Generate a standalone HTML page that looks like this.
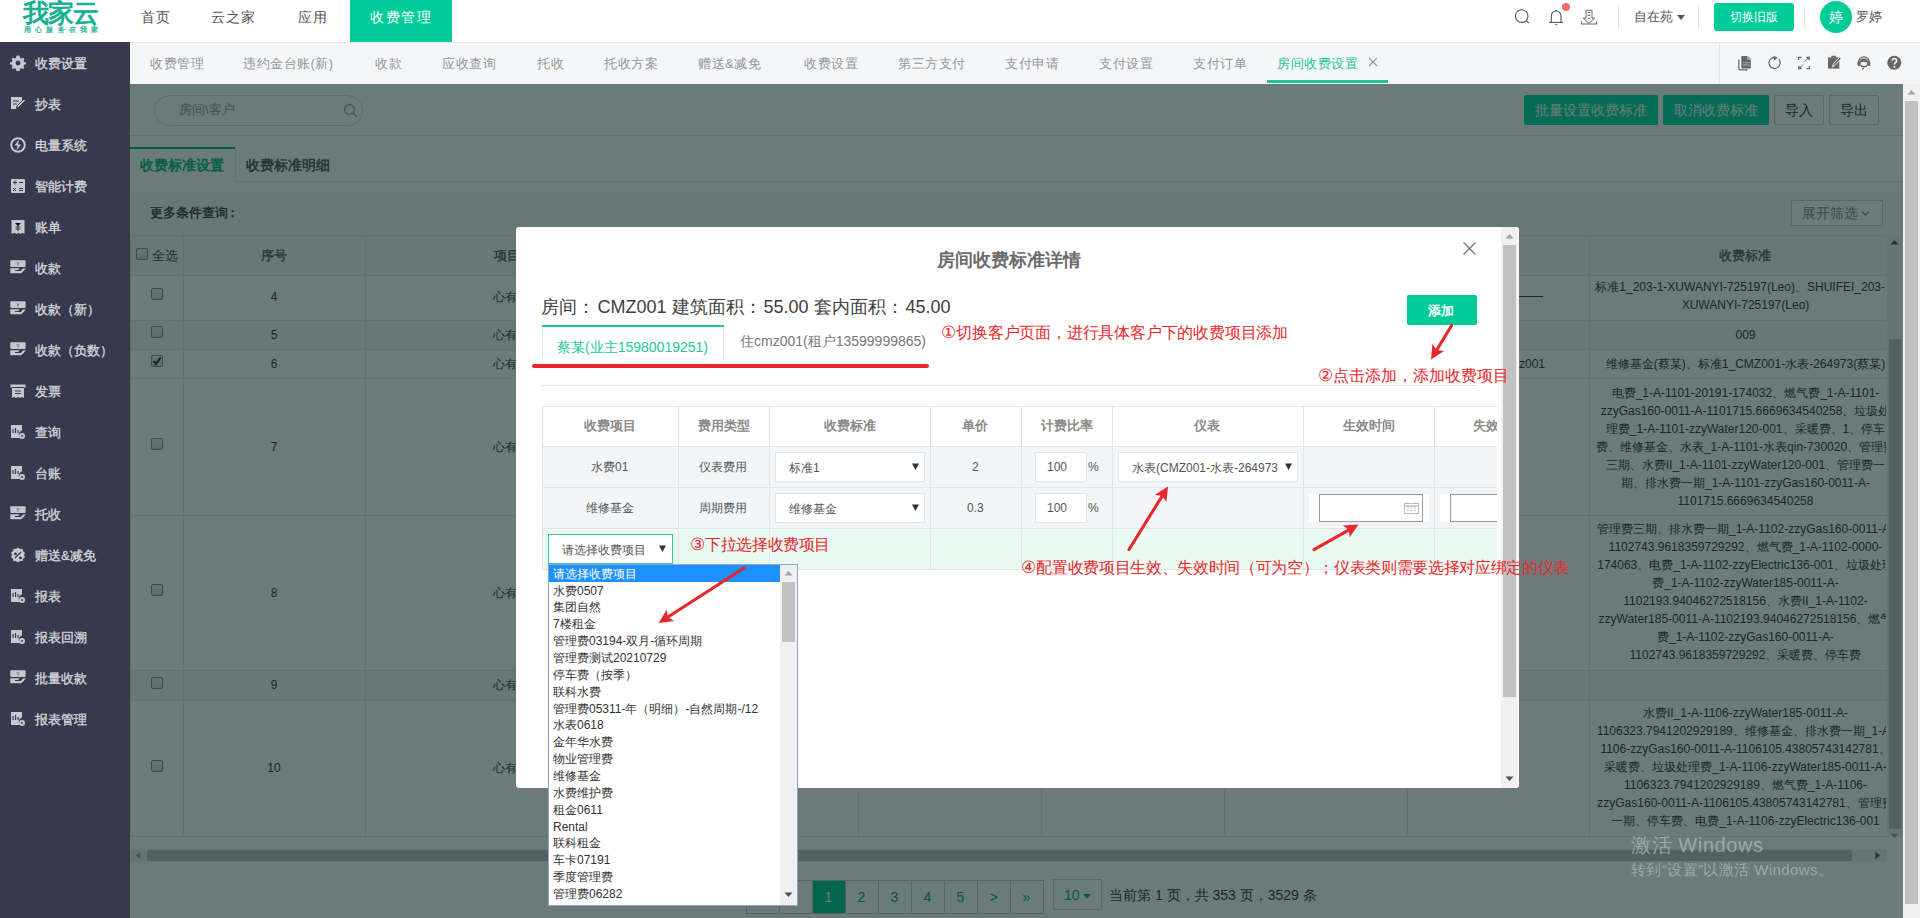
<!DOCTYPE html>
<html><head><meta charset="utf-8"><style>
*{box-sizing:border-box;margin:0;padding:0}
html,body{width:1920px;height:918px;overflow:hidden;background:#fff;font-family:"Liberation Sans",sans-serif;color:#333}
.a{position:absolute;white-space:nowrap}
.tl{position:absolute;height:1px;background:#e7e7e7}
.tv{position:absolute;width:1px;background:#e7e7e7}
.c12{font-size:12px;line-height:14px;color:#333}
.t13{font-size:13px;line-height:16px}
</style></head><body>
<div class="a" style="left:0px;top:0px;width:1920px;height:42px;background:#fff"></div>
<div class="a" style="left:0px;top:42px;width:1920px;height:1px;background:#e6e6e6"></div>
<div class="a" style="left:23px;top:-1px;font-size:26px;color:#12b08f;-webkit-text-stroke:0.9px #12b08f;letter-spacing:-1px;line-height:28px">我家云</div>
<div class="a" style="left:24px;top:25px;font-size:7px;color:#2fb898;-webkit-text-stroke:0.3px #2fb898;letter-spacing:4.2px;line-height:9px">用心服务在我家</div>
<div class="a" style="left:141px;top:9px;font-size:14px;line-height:16px;color:#555;letter-spacing:1px;">首页</div>
<div class="a" style="left:211px;top:9px;font-size:14px;line-height:16px;color:#555;letter-spacing:1px;">云之家</div>
<div class="a" style="left:298px;top:9px;font-size:14px;line-height:16px;color:#555;letter-spacing:1px;">应用</div>
<div class="a" style="left:350px;top:0px;width:102px;height:42px;background:#00cc99"></div>
<div class="a" style="left:370px;top:9px;font-size:14px;line-height:16px;color:#fff;letter-spacing:1.6px;">收费管理</div>
<svg class="a" style="left:1505px;top:0px" width="100" height="35" viewBox="0 0 100 35"><circle cx="16.7" cy="16.1" r="6.3" fill="none" stroke="#555" stroke-width="1.1"/><path d="M21.3 20.7l2.5 2.5" stroke="#555" stroke-width="1.2"/><path d="M46.3 22.4v-6.5a4.85 4.85 0 0 1 9.7 0v6.5" fill="none" stroke="#555" stroke-width="1.1"/><path d="M44 22.4h14" stroke="#555" stroke-width="1.1"/><path d="M50.2 24.6h2" stroke="#555" stroke-width="1"/><path d="M50.2 11l1-1 1 1" stroke="#555" stroke-width="1"/><path d="M81 10.3h6v7.8h2.8l-5.8 5.2-5.8-5.2h2.8z" fill="none" stroke="#666" stroke-width="1"/><path d="M82.8 12.5h2.4M82.8 15.4h2.4M82.8 18.3h2.4" stroke="#666" stroke-width="1.1"/><path d="M76.5 21.5v2.5h15v-2.5" fill="none" stroke="#666" stroke-width="1.1"/></svg>
<div class="a" style="left:1562px;top:3px;width:8px;height:8px;border-radius:50%;background:#f36a6a"></div>
<div class="a" style="left:1618px;top:5px;width:1px;height:24px;background:#e6e6e6"></div>
<div class="a" style="left:1634px;top:9px;font-size:13px;line-height:16px;color:#555;">自在苑</div>
<svg class="a" style="left:1677px;top:15px" width="8" height="6" viewBox="0 0 8 6"><path d="M0 0h8l-4 5z" fill="#555"/></svg>
<div class="a" style="left:1698px;top:5px;width:1px;height:24px;background:#e6e6e6"></div>
<div class="a" style="left:1714px;top:3px;width:80px;height:28px;border-radius:3px;background:#00cc99"></div>
<div class="a" style="left:1730px;top:9px;font-size:12px;line-height:16px;color:#fff;">切换旧版</div>
<div class="a" style="left:1804px;top:5px;width:1px;height:24px;background:#e6e6e6"></div>
<div class="a" style="left:1820px;top:1px;width:32px;height:32px;border-radius:50%;background:#00cc99"></div>
<div class="a" style="left:1829px;top:9px;font-size:14px;line-height:16px;color:#fff;">婷</div>
<div class="a" style="left:1856px;top:9px;font-size:13px;line-height:16px;color:#555;">罗婷</div>
<div class="a" style="left:0px;top:42px;width:130px;height:876px;background:#363a4c"></div>
<svg class="a" style="left:10px;top:55.0px" width="16" height="16" viewBox="0 0 16 16"><path d="M8 0.5l1.6 0.3 0.4 2 1.3 0.7 1.9-0.8 1.1 1.2-0.8 1.9 0.6 1.3 2 0.5v1.6l-2 0.5-0.6 1.3 0.8 1.9-1.1 1.2-1.9-0.8-1.3 0.7-0.4 2-1.6 0.3-1.6-0.3-0.4-2-1.3-0.7-1.9 0.8-1.1-1.2 0.8-1.9-0.6-1.3-2-0.5v-1.6l2-0.5 0.6-1.3-0.8-1.9 1.1-1.2 1.9 0.8 1.3-0.7 0.4-2z M8 5.6a2.4 2.4 0 1 0 0.01 0z" fill="#c8c8cc" fill-rule="evenodd"/></svg>
<div class="a" style="left:35px;top:56.0px;font-size:13px;line-height:16px;color:#d2d3d7;-webkit-text-stroke:0.35px #d2d3d7;">收费设置</div>
<svg class="a" style="left:10px;top:96.0px" width="16" height="16" viewBox="0 0 16 16"><path d="M1 1h11v4l-5 5-1 3h-5z" fill="#c8c8cc"/><path d="M14 3l1.5 1.5-7 7-2 0.5 0.5-2z" fill="#c8c8cc" stroke="#363a4c" stroke-width="1"/><path d="M3 5h6M3 8h4" stroke="#363a4c" stroke-width="1.2"/></svg>
<div class="a" style="left:35px;top:97.0px;font-size:13px;line-height:16px;color:#d2d3d7;-webkit-text-stroke:0.35px #d2d3d7;">抄表</div>
<svg class="a" style="left:10px;top:137.0px" width="16" height="16" viewBox="0 0 16 16"><circle cx="8" cy="8" r="6.8" fill="none" stroke="#c8c8cc" stroke-width="2"/><path d="M9 2.5l-4.5 6h3l-1 5 4.5-6h-3z" fill="#c8c8cc"/></svg>
<div class="a" style="left:35px;top:138.0px;font-size:13px;line-height:16px;color:#d2d3d7;-webkit-text-stroke:0.35px #d2d3d7;">电量系统</div>
<svg class="a" style="left:10px;top:178.0px" width="16" height="16" viewBox="0 0 16 16"><rect x="1" y="1" width="14" height="14" rx="1" fill="#c8c8cc"/><path d="M3 4.5h4M5 2.5v4M9 4.5h4M3 10l3 3M6 10l-3 3M9 10.5h4M9 12.5h4" stroke="#363a4c" stroke-width="1"/></svg>
<div class="a" style="left:35px;top:179.0px;font-size:13px;line-height:16px;color:#d2d3d7;-webkit-text-stroke:0.35px #d2d3d7;">智能计费</div>
<svg class="a" style="left:10px;top:219.0px" width="16" height="16" viewBox="0 0 16 16"><path d="M1.5 1h13v14l-2-1.2-2 1.2-2-1.2-2 1.2-2-1.2-3 1.2z" fill="#c8c8cc"/><path d="M5.5 4l2.5 3 2.5-3M8 7v5M5.5 8h5M5.5 10h5" stroke="#363a4c" stroke-width="1"/></svg>
<div class="a" style="left:35px;top:220.0px;font-size:13px;line-height:16px;color:#d2d3d7;-webkit-text-stroke:0.35px #d2d3d7;">账单</div>
<svg class="a" style="left:10px;top:260.0px" width="16" height="16" viewBox="0 0 16 16"><rect x="0.3" y="0.2" width="15.3" height="6.8" rx="1" fill="#c8c8cc"/><path d="M6.8 2.3l1.2 1.5 1.2-1.5M8 3.8v2" stroke="#363a4c" stroke-width="0.6" fill="none"/><path d="M0.3 8.2h9.3l-1.4 1.9h-3.2v0.9h5.8l2.2-2.6h2.9l-4.6 4.8h-11z" fill="#c8c8cc"/><path d="M2 7.5h8" stroke="#363a4c" stroke-width="0.7"/></svg>
<div class="a" style="left:35px;top:261.0px;font-size:13px;line-height:16px;color:#d2d3d7;-webkit-text-stroke:0.35px #d2d3d7;">收款</div>
<svg class="a" style="left:10px;top:301.0px" width="16" height="16" viewBox="0 0 16 16"><rect x="0.3" y="0.2" width="15.3" height="6.8" rx="1" fill="#c8c8cc"/><path d="M6.8 2.3l1.2 1.5 1.2-1.5M8 3.8v2" stroke="#363a4c" stroke-width="0.6" fill="none"/><path d="M0.3 8.2h9.3l-1.4 1.9h-3.2v0.9h5.8l2.2-2.6h2.9l-4.6 4.8h-11z" fill="#c8c8cc"/><path d="M2 7.5h8" stroke="#363a4c" stroke-width="0.7"/></svg>
<div class="a" style="left:35px;top:302.0px;font-size:13px;line-height:16px;color:#d2d3d7;-webkit-text-stroke:0.35px #d2d3d7;">收款（新）</div>
<svg class="a" style="left:10px;top:342.0px" width="16" height="16" viewBox="0 0 16 16"><rect x="0.3" y="0.2" width="15.3" height="6.8" rx="1" fill="#c8c8cc"/><path d="M6.8 2.3l1.2 1.5 1.2-1.5M8 3.8v2" stroke="#363a4c" stroke-width="0.6" fill="none"/><path d="M0.3 8.2h9.3l-1.4 1.9h-3.2v0.9h5.8l2.2-2.6h2.9l-4.6 4.8h-11z" fill="#c8c8cc"/><path d="M2 7.5h8" stroke="#363a4c" stroke-width="0.7"/></svg>
<div class="a" style="left:35px;top:343.0px;font-size:13px;line-height:16px;color:#d2d3d7;-webkit-text-stroke:0.35px #d2d3d7;">收款（负数）</div>
<svg class="a" style="left:10px;top:383.0px" width="16" height="16" viewBox="0 0 16 16"><path d="M0.5 1.5h15v3h-1.5v10.5l-2-1-2 1-2-1-2 1-2-1-2 1v-10.5h-1.5z" fill="#c8c8cc"/><path d="M2 4.5h12M5 8h6M5 10.5h6" stroke="#363a4c" stroke-width="1.2"/></svg>
<div class="a" style="left:35px;top:384.0px;font-size:13px;line-height:16px;color:#d2d3d7;-webkit-text-stroke:0.35px #d2d3d7;">发票</div>
<svg class="a" style="left:10px;top:424.0px" width="16" height="16" viewBox="0 0 16 16"><path d="M1 1h11v5.5a4.5 4.5 0 0 0-2 7.5h-9z" fill="#c8c8cc"/><circle cx="12" cy="12" r="3" fill="#c8c8cc"/><path d="M3 5v4M5.5 4v5M8 6v3" stroke="#363a4c" stroke-width="1.2"/><circle cx="12" cy="12" r="1" fill="#363a4c"/></svg>
<div class="a" style="left:35px;top:425.0px;font-size:13px;line-height:16px;color:#d2d3d7;-webkit-text-stroke:0.35px #d2d3d7;">查询</div>
<svg class="a" style="left:10px;top:465.0px" width="16" height="16" viewBox="0 0 16 16"><path d="M1 1h11v5.5a4.5 4.5 0 0 0-2 7.5h-9z" fill="#c8c8cc"/><circle cx="12" cy="12" r="3" fill="#c8c8cc"/><path d="M3 5v4M5.5 4v5M8 6v3" stroke="#363a4c" stroke-width="1.2"/><circle cx="12" cy="12" r="1" fill="#363a4c"/></svg>
<div class="a" style="left:35px;top:466.0px;font-size:13px;line-height:16px;color:#d2d3d7;-webkit-text-stroke:0.35px #d2d3d7;">台账</div>
<svg class="a" style="left:10px;top:506.0px" width="16" height="16" viewBox="0 0 16 16"><rect x="0.3" y="0.2" width="15.3" height="6.8" rx="1" fill="#c8c8cc"/><path d="M6.8 2.3l1.2 1.5 1.2-1.5M8 3.8v2" stroke="#363a4c" stroke-width="0.6" fill="none"/><path d="M0.3 8.2h9.3l-1.4 1.9h-3.2v0.9h5.8l2.2-2.6h2.9l-4.6 4.8h-11z" fill="#c8c8cc"/><path d="M2 7.5h8" stroke="#363a4c" stroke-width="0.7"/></svg>
<div class="a" style="left:35px;top:507.0px;font-size:13px;line-height:16px;color:#d2d3d7;-webkit-text-stroke:0.35px #d2d3d7;">托收</div>
<svg class="a" style="left:10px;top:547.0px" width="16" height="16" viewBox="0 0 16 16"><path d="M8 0.5l2 1.5 2.5-0.2 0.5 2.5 2 1.5-1 2.2 1 2.2-2 1.5-0.5 2.5-2.5-0.2-2 1.5-2-1.5-2.5 0.2-0.5-2.5-2-1.5 1-2.2-1-2.2 2-1.5 0.5-2.5 2.5 0.2z" fill="#c8c8cc"/><path d="M5 11l6-6M5.5 6a0.8 0.8 0 1 0 0.01 0M10.5 10a0.8 0.8 0 1 0 0.01 0" stroke="#363a4c" stroke-width="1.2"/></svg>
<div class="a" style="left:35px;top:548.0px;font-size:13px;line-height:16px;color:#d2d3d7;-webkit-text-stroke:0.35px #d2d3d7;">赠送&减免</div>
<svg class="a" style="left:10px;top:588.0px" width="16" height="16" viewBox="0 0 16 16"><path d="M1 1h11v5.5a4.5 4.5 0 0 0-2 7.5h-9z" fill="#c8c8cc"/><circle cx="12" cy="12" r="3" fill="#c8c8cc"/><path d="M3 5v4M5.5 4v5M8 6v3" stroke="#363a4c" stroke-width="1.2"/><circle cx="12" cy="12" r="1" fill="#363a4c"/></svg>
<div class="a" style="left:35px;top:589.0px;font-size:13px;line-height:16px;color:#d2d3d7;-webkit-text-stroke:0.35px #d2d3d7;">报表</div>
<svg class="a" style="left:10px;top:629.0px" width="16" height="16" viewBox="0 0 16 16"><path d="M1 1h11v5.5a4.5 4.5 0 0 0-2 7.5h-9z" fill="#c8c8cc"/><circle cx="12" cy="12" r="3" fill="#c8c8cc"/><path d="M3 5v4M5.5 4v5M8 6v3" stroke="#363a4c" stroke-width="1.2"/><circle cx="12" cy="12" r="1" fill="#363a4c"/></svg>
<div class="a" style="left:35px;top:630.0px;font-size:13px;line-height:16px;color:#d2d3d7;-webkit-text-stroke:0.35px #d2d3d7;">报表回溯</div>
<svg class="a" style="left:10px;top:670.0px" width="16" height="16" viewBox="0 0 16 16"><rect x="0.3" y="0.2" width="15.3" height="6.8" rx="1" fill="#c8c8cc"/><path d="M6.8 2.3l1.2 1.5 1.2-1.5M8 3.8v2" stroke="#363a4c" stroke-width="0.6" fill="none"/><path d="M0.3 8.2h9.3l-1.4 1.9h-3.2v0.9h5.8l2.2-2.6h2.9l-4.6 4.8h-11z" fill="#c8c8cc"/><path d="M2 7.5h8" stroke="#363a4c" stroke-width="0.7"/></svg>
<div class="a" style="left:35px;top:671.0px;font-size:13px;line-height:16px;color:#d2d3d7;-webkit-text-stroke:0.35px #d2d3d7;">批量收款</div>
<svg class="a" style="left:10px;top:711.0px" width="16" height="16" viewBox="0 0 16 16"><path d="M1 1h11v5.5a4.5 4.5 0 0 0-2 7.5h-9z" fill="#c8c8cc"/><circle cx="12" cy="12" r="3" fill="#c8c8cc"/><path d="M3 5v4M5.5 4v5M8 6v3" stroke="#363a4c" stroke-width="1.2"/><circle cx="12" cy="12" r="1" fill="#363a4c"/></svg>
<div class="a" style="left:35px;top:712.0px;font-size:13px;line-height:16px;color:#d2d3d7;-webkit-text-stroke:0.35px #d2d3d7;">报表管理</div>
<div class="a" style="left:130px;top:43px;width:1790px;height:41px;background:#f5f6f8"></div>
<div class="a" style="left:150px;top:56px;font-size:13px;line-height:16px;color:#959595;letter-spacing:0.5px;">收费管理</div>
<div class="a" style="left:243px;top:56px;font-size:13px;line-height:16px;color:#959595;letter-spacing:0.5px;">违约金台账(新)</div>
<div class="a" style="left:375px;top:56px;font-size:13px;line-height:16px;color:#959595;letter-spacing:0.5px;">收款</div>
<div class="a" style="left:442px;top:56px;font-size:13px;line-height:16px;color:#959595;letter-spacing:0.5px;">应收查询</div>
<div class="a" style="left:537px;top:56px;font-size:13px;line-height:16px;color:#959595;letter-spacing:0.5px;">托收</div>
<div class="a" style="left:604px;top:56px;font-size:13px;line-height:16px;color:#959595;letter-spacing:0.5px;">托收方案</div>
<div class="a" style="left:698px;top:56px;font-size:13px;line-height:16px;color:#959595;letter-spacing:0.5px;">赠送&amp;减免</div>
<div class="a" style="left:804px;top:56px;font-size:13px;line-height:16px;color:#959595;letter-spacing:0.5px;">收费设置</div>
<div class="a" style="left:898px;top:56px;font-size:13px;line-height:16px;color:#959595;letter-spacing:0.5px;">第三方支付</div>
<div class="a" style="left:1005px;top:56px;font-size:13px;line-height:16px;color:#959595;letter-spacing:0.5px;">支付申请</div>
<div class="a" style="left:1099px;top:56px;font-size:13px;line-height:16px;color:#959595;letter-spacing:0.5px;">支付设置</div>
<div class="a" style="left:1193px;top:56px;font-size:13px;line-height:16px;color:#959595;letter-spacing:0.5px;">支付订单</div>
<div class="a" style="left:1277px;top:56px;font-size:13px;line-height:16px;color:#1dc49a;letter-spacing:0.6px;">房间收费设置</div>
<svg class="a" style="left:1368px;top:57px" width="10" height="10" viewBox="0 0 10 10"><path d="M1 1l8 8M9 1l-8 8" stroke="#999" stroke-width="1.1"/></svg>
<div class="a" style="left:1267px;top:80px;width:121px;height:3px;background:#1dc49a"></div>
<div class="a" style="left:1719px;top:42px;width:1px;height:42px;background:#e4e4e4"></div>
<svg class="a" style="left:1725px;top:45px" width="185" height="35" viewBox="0 0 185 35"><path d="M13.8 14.5v9.3a1 1 0 0 0 1 1h8" fill="none" stroke="#666" stroke-width="1.2"/><path d="M16.3 12a1 1 0 0 1 1-1h5.5l3 3v8.6a1 1 0 0 1-1 1h-7.5a1 1 0 0 1-1-1z" fill="#666"/><path d="M22.8 11v3h3" fill="none" stroke="#f5f6f8" stroke-width="0.8"/><path d="M17.5 17.8h7.3M17.5 20h7.3" stroke="#aaa" stroke-width="1"/><path d="M53.8 14.2a5.6 5.6 0 1 1-4.7-1.9" fill="none" stroke="#666" stroke-width="1.2"/><path d="M48.6 10.8l4.2 2-3.6 2.8z" fill="#666"/><path d="M73.7 15v-2.6h2.8M81.5 12.4h2.8V15M84.3 21v2.6h-2.8M76.5 23.6h-2.8V21" fill="none" stroke="#666" stroke-width="1.1"/><path d="M79.7 16.4l4-3.5M78.3 19.6l-4 3.5" stroke="#666" stroke-width="0.9"/><path d="M81.4 12.7h2.3v2.3zM74.6 23.3h2.3L74.6 21z" fill="#666"/><path d="M103 12.4h11.3v11.2h-11.3z" fill="#666"/><path d="M107 13v-1.5h3.3V13" fill="none" stroke="#666" stroke-width="1.3"/><path d="M107.4 22l1-3.2 6.2-6.6 1.6 1.6-6.2 6.6z" fill="#666" stroke="#f5f6f8" stroke-width="0.9"/><path d="M133.6 19.5v-2.3a5.3 5.3 0 0 1 10.6 0v2.3" fill="none" stroke="#666" stroke-width="1.4"/><circle cx="138.9" cy="18" r="4.6" fill="#666"/><path d="M135.6 17.5q3.3-1.4 6.6 0v2.3q-3.3 2.6-6.6 0z" fill="#eee"/><rect x="132.5" y="16.5" width="2.5" height="4.5" rx="1" fill="#666"/><rect x="142.8" y="16.5" width="2.5" height="4.5" rx="1" fill="#666"/><path d="M139 23.6h-1.5v1" fill="none" stroke="#666" stroke-width="1"/><circle cx="169.3" cy="17.8" r="7" fill="#666"/><path d="M167.2 15.8a2.2 2.2 0 1 1 3.2 1.9c-0.6 0.3-0.9 0.7-0.9 1.4v0.5" fill="none" stroke="#fff" stroke-width="1.5"/><circle cx="169.4" cy="21.7" r="0.95" fill="#fff"/></svg>
<div class="a" style="left:0;top:0;width:1920px;height:918px;clip-path:inset(84px 17px 0 130px)">
<div class="a" style="left:130px;top:84px;width:1773px;height:834px;background:#fff"></div>
<div class="a" style="left:154px;top:95px;width:209px;height:31px;border:1px solid #d9d9d9;border-radius:16px;background:#fff"></div>
<div class="a" style="left:179px;top:102px;font-size:13px;line-height:16px;color:#999;">房间\客户</div>
<svg class="a" style="left:343px;top:103px" width="15" height="15" viewBox="0 0 15 15"><circle cx="6.5" cy="6.5" r="5" fill="none" stroke="#aaa" stroke-width="1.5"/><path d="M10 10l4 4" stroke="#aaa" stroke-width="1.6"/></svg>
<div class="a" style="left:1524px;top:95px;width:134px;height:30px;border-radius:2px;background:#00d8a4"></div>
<div class="a" style="left:1535px;top:102px;font-size:14px;line-height:16px;color:#fff;">批量设置收费标准</div>
<div class="a" style="left:1663px;top:95px;width:106px;height:30px;border-radius:2px;background:#00d8a4"></div>
<div class="a" style="left:1674px;top:102px;font-size:14px;line-height:16px;color:#fff;">取消收费标准</div>
<div class="a" style="left:1774px;top:95px;width:50px;height:30px;border:1px solid #ccc;border-radius:2px;background:#fff"></div>
<div class="a" style="left:1785px;top:102px;font-size:14px;line-height:16px;color:#333;">导入</div>
<div class="a" style="left:1829px;top:95px;width:50px;height:30px;border:1px solid #ccc;border-radius:2px;background:#fff"></div>
<div class="a" style="left:1840px;top:102px;font-size:14px;line-height:16px;color:#333;">导出</div>
<div class="a" style="left:130px;top:135px;width:1773px;height:1px;background:#e7e7e7"></div>
<div class="a" style="left:130px;top:147px;width:105px;height:2px;background:#00b386"></div>
<div class="a" style="left:235px;top:181px;width:1668px;height:1px;background:#e7e7e7"></div>
<div class="a" style="left:235px;top:147px;width:1px;height:35px;background:#e7e7e7"></div>
<div class="a" style="left:140px;top:157px;font-size:14px;line-height:16px;color:#00b386;font-weight:bold;">收费标准设置</div>
<div class="a" style="left:246px;top:157px;font-size:14px;line-height:16px;color:#555;font-weight:bold;">收费标准明细</div>
<div class="a" style="left:130px;top:191px;width:1773px;height:44px;background:#f8f8f8"></div>
<div class="a" style="left:150px;top:205px;font-size:13px;line-height:16px;color:#333;-webkit-text-stroke:0.4px #333;">更多条件查询<span style="margin-left:-2px">：</span></div>
<div class="a" style="left:1791px;top:200px;width:92px;height:26px;border:1px solid #ccc;background:#fff"></div>
<div class="a" style="left:1802px;top:205px;font-size:14px;line-height:16px;color:#888;">展开筛选</div>
<svg class="a" style="left:1861px;top:210px" width="9" height="7" viewBox="0 0 9 7"><path d="M1 1.5l3.5 3.5 3.5-3.5" fill="none" stroke="#888" stroke-width="1.2"/></svg>
<div class="a" style="left:130px;top:235px;width:1757px;height:40px;background:#f7f7f7"></div>
<div class="a" style="left:130px;top:320px;width:1757px;height:29px;background:#f7f7f7"></div>
<div class="a" style="left:130px;top:670px;width:1757px;height:30px;background:#f7f7f7"></div>
<div class="a" style="left:130px;top:235px;width:1757px;height:1px;background:#e7e7e7"></div>
<div class="a" style="left:130px;top:275px;width:1757px;height:1px;background:#e7e7e7"></div>
<div class="a" style="left:130px;top:320px;width:1757px;height:1px;background:#e7e7e7"></div>
<div class="a" style="left:130px;top:349px;width:1757px;height:1px;background:#e7e7e7"></div>
<div class="a" style="left:130px;top:378px;width:1757px;height:1px;background:#e7e7e7"></div>
<div class="a" style="left:130px;top:515px;width:1757px;height:1px;background:#e7e7e7"></div>
<div class="a" style="left:130px;top:670px;width:1757px;height:1px;background:#e7e7e7"></div>
<div class="a" style="left:130px;top:700px;width:1757px;height:1px;background:#e7e7e7"></div>
<div class="a" style="left:130px;top:836px;width:1757px;height:1px;background:#e7e7e7"></div>
<div class="a" style="left:130px;top:235px;width:1px;height:601px;background:#e7e7e7"></div>
<div class="a" style="left:183px;top:235px;width:1px;height:601px;background:#e7e7e7"></div>
<div class="a" style="left:365px;top:235px;width:1px;height:601px;background:#e7e7e7"></div>
<div class="a" style="left:675px;top:235px;width:1px;height:601px;background:#e7e7e7"></div>
<div class="a" style="left:858px;top:235px;width:1px;height:601px;background:#e7e7e7"></div>
<div class="a" style="left:1041px;top:235px;width:1px;height:601px;background:#e7e7e7"></div>
<div class="a" style="left:1224px;top:235px;width:1px;height:601px;background:#e7e7e7"></div>
<div class="a" style="left:1407px;top:235px;width:1px;height:601px;background:#e7e7e7"></div>
<div class="a" style="left:1589px;top:235px;width:1px;height:601px;background:#e7e7e7"></div>
<div class="a" style="left:136px;top:248px;width:12px;height:12px;border:1px solid #8a8a8a;border-radius:2px;background:linear-gradient(#f2f2f2,#d8d8d8)"></div>
<div class="a" style="left:152px;top:248px;font-size:13px;line-height:16px;color:#444;">全选</div>
<div class="a" style="left:261px;top:248px;font-size:13px;line-height:16px;color:#555;-webkit-text-stroke:0.35px #555;">序号</div>
<div class="a" style="left:494px;top:248px;font-size:13px;line-height:16px;color:#555;-webkit-text-stroke:0.35px #555;">项目名称</div>
<div class="a" style="left:151px;top:288.0px;width:12px;height:12px;border:1px solid #8a8a8a;border-radius:2px;background:linear-gradient(#f2f2f2,#d8d8d8)"></div>
<div class="a c12" style="left:224px;width:100px;text-align:center;top:289.5px">4</div>
<div class="a c12" style="left:493px;top:289.5px">心有灵犀</div>
<div class="a" style="left:151px;top:326.0px;width:12px;height:12px;border:1px solid #8a8a8a;border-radius:2px;background:linear-gradient(#f2f2f2,#d8d8d8)"></div>
<div class="a c12" style="left:224px;width:100px;text-align:center;top:327.5px">5</div>
<div class="a c12" style="left:493px;top:327.5px">心有灵犀</div>
<div class="a" style="left:151px;top:355.0px;width:12px;height:12px;border:1px solid #8a8a8a;border-radius:2px;background:linear-gradient(#f2f2f2,#d8d8d8)"></div>
<svg class="a" style="left:152px;top:356.0px" width="10" height="10" viewBox="0 0 10 10"><path d="M1.5 5l2.5 3 4.5-6.5" fill="none" stroke="#222" stroke-width="2"/></svg>
<div class="a c12" style="left:224px;width:100px;text-align:center;top:356.5px">6</div>
<div class="a c12" style="left:493px;top:356.5px">心有灵犀</div>
<div class="a" style="left:151px;top:438.0px;width:12px;height:12px;border:1px solid #8a8a8a;border-radius:2px;background:linear-gradient(#f2f2f2,#d8d8d8)"></div>
<div class="a c12" style="left:224px;width:100px;text-align:center;top:439.5px">7</div>
<div class="a c12" style="left:493px;top:439.5px">心有灵犀</div>
<div class="a" style="left:151px;top:584.0px;width:12px;height:12px;border:1px solid #8a8a8a;border-radius:2px;background:linear-gradient(#f2f2f2,#d8d8d8)"></div>
<div class="a c12" style="left:224px;width:100px;text-align:center;top:585.5px">8</div>
<div class="a c12" style="left:493px;top:585.5px">心有灵犀</div>
<div class="a" style="left:151px;top:676.5px;width:12px;height:12px;border:1px solid #8a8a8a;border-radius:2px;background:linear-gradient(#f2f2f2,#d8d8d8)"></div>
<div class="a c12" style="left:224px;width:100px;text-align:center;top:678px">9</div>
<div class="a c12" style="left:493px;top:678px">心有灵犀</div>
<div class="a" style="left:151px;top:759.5px;width:12px;height:12px;border:1px solid #8a8a8a;border-radius:2px;background:linear-gradient(#f2f2f2,#d8d8d8)"></div>
<div class="a c12" style="left:224px;width:100px;text-align:center;top:761px">10</div>
<div class="a c12" style="left:493px;top:761px">心有灵犀</div>
<div class="a c12" style="left:1519px;top:289px">——</div>
<div class="a c12" style="left:1491px;top:356.5px">住cmz001</div>
<div class="a" style="left:0;top:0;width:1886px;height:918px;overflow:hidden">
<div class="a" style="left:1719px;top:248px;font-size:13px;line-height:16px;color:#555;-webkit-text-stroke:0.35px #555;">收费标准</div>
<div class="a c12" style="left:1545.5px;width:400px;text-align:center;top:280.25px">标准1_203-1-XUWANYI-725197(Leo)、SHUIFEI_203-1-</div>
<div class="a c12" style="left:1545.5px;width:400px;text-align:center;top:298.25px">XUWANYI-725197(Leo)</div>
<div class="a c12" style="left:1545.5px;width:400px;text-align:center;top:327.5px">009</div>
<div class="a c12" style="left:1545.5px;width:400px;text-align:center;top:356.5px">维修基金(蔡某)、标准1_CMZ001-水表-264973(蔡某)</div>
<div class="a c12" style="left:1545.5px;width:400px;text-align:center;top:386px">电费_1-A-1101-20191-174032、燃气费_1-A-1101-</div>
<div class="a c12" style="left:1545.5px;width:400px;text-align:center;top:404px">zzyGas160-0011-A-1101715.6669634540258、垃圾处</div>
<div class="a c12" style="left:1545.5px;width:400px;text-align:center;top:422px">理费_1-A-1101-zzyWater120-001、采暖费、1、停车</div>
<div class="a c12" style="left:1545.5px;width:400px;text-align:center;top:440px">费、维修基金、水表_1-A-1101-水表qin-730020、管理费</div>
<div class="a c12" style="left:1545.5px;width:400px;text-align:center;top:458px">三期、水费II_1-A-1101-zzyWater120-001、管理费一</div>
<div class="a c12" style="left:1545.5px;width:400px;text-align:center;top:476px">期、排水费一期_1-A-1101-zzyGas160-0011-A-</div>
<div class="a c12" style="left:1545.5px;width:400px;text-align:center;top:494px">1101715.6669634540258</div>
<div class="a c12" style="left:1545.5px;width:400px;text-align:center;top:522px">管理费三期、排水费一期_1-A-1102-zzyGas160-0011-A-</div>
<div class="a c12" style="left:1545.5px;width:400px;text-align:center;top:540px">1102743.9618359729292、燃气费_1-A-1102-0000-</div>
<div class="a c12" style="left:1545.5px;width:400px;text-align:center;top:558px">174063、电费_1-A-1102-zzyElectric136-001、垃圾处理</div>
<div class="a c12" style="left:1545.5px;width:400px;text-align:center;top:576px">费_1-A-1102-zzyWater185-0011-A-</div>
<div class="a c12" style="left:1545.5px;width:400px;text-align:center;top:594px">1102193.94046272518156、水费II_1-A-1102-</div>
<div class="a c12" style="left:1545.5px;width:400px;text-align:center;top:612px">zzyWater185-0011-A-1102193.94046272518156、燃气</div>
<div class="a c12" style="left:1545.5px;width:400px;text-align:center;top:630px">费_1-A-1102-zzyGas160-0011-A-</div>
<div class="a c12" style="left:1545.5px;width:400px;text-align:center;top:648px">1102743.9618359729292、采暖费、停车费</div>
<div class="a c12" style="left:1545.5px;width:400px;text-align:center;top:706px">水费II_1-A-1106-zzyWater185-0011-A-</div>
<div class="a c12" style="left:1545.5px;width:400px;text-align:center;top:724px">1106323.7941202929189、维修基金、排水费一期_1-A-</div>
<div class="a c12" style="left:1545.5px;width:400px;text-align:center;top:742px">1106-zzyGas160-0011-A-1106105.43805743142781、</div>
<div class="a c12" style="left:1545.5px;width:400px;text-align:center;top:760px">采暖费、垃圾处理费_1-A-1106-zzyWater185-0011-A-</div>
<div class="a c12" style="left:1545.5px;width:400px;text-align:center;top:778px">1106323.7941202929189、燃气费_1-A-1106-</div>
<div class="a c12" style="left:1545.5px;width:400px;text-align:center;top:796px">zzyGas160-0011-A-1106105.43805743142781、管理费</div>
<div class="a c12" style="left:1545.5px;width:400px;text-align:center;top:814px">一期、停车费、电费_1-A-1106-zzyElectric136-001</div>
</div>
<div class="a" style="left:1887px;top:235px;width:15px;height:602px;background:#f1f1f1"></div>
<svg class="a" style="left:1890px;top:239px" width="9" height="6" viewBox="0 0 9 6"><path d="M0.5 5.5l4-4.5 4 4.5z" fill="#505050"/></svg>
<div class="a" style="left:1889px;top:339px;width:12px;height:490px;background:#c1c1c1"></div>
<svg class="a" style="left:1890px;top:833px" width="9" height="6" viewBox="0 0 9 6"><path d="M0.5 0.5l4 4.5 4-4.5z" fill="#a3a3a3"/></svg>
<div class="a" style="left:130px;top:849px;width:1757px;height:13px;background:#f1f1f1"></div>
<svg class="a" style="left:135px;top:851px" width="6" height="9" viewBox="0 0 6 9"><path d="M5.5 0.5l-4.5 4 4.5 4z" fill="#a3a3a3"/></svg>
<div class="a" style="left:147px;top:850px;width:1705px;height:11px;background:#c1c1c1"></div>
<svg class="a" style="left:1875px;top:851px" width="6" height="9" viewBox="0 0 6 9"><path d="M0.5 0.5l4.5 4-4.5 4z" fill="#505050"/></svg>
<div class="a" style="left:746px;top:880px;width:34px;height:34px;border:1px solid #c8c8c8;background:#fff"></div>
<div class="a" style="left:746px;top:888px;width:33px;text-align:center;font-size:14px;line-height:18px;color:#00a87e">«</div>
<div class="a" style="left:779px;top:880px;width:34px;height:34px;border:1px solid #c8c8c8;background:#fff"></div>
<div class="a" style="left:779px;top:888px;width:33px;text-align:center;font-size:14px;line-height:18px;color:#00a87e">‹</div>
<div class="a" style="left:812px;top:880px;width:34px;height:34px;border:1px solid #c8c8c8;background:#00c896"></div>
<div class="a" style="left:812px;top:888px;width:33px;text-align:center;font-size:14px;line-height:18px;color:#fff">1</div>
<div class="a" style="left:845px;top:880px;width:34px;height:34px;border:1px solid #c8c8c8;background:#fff"></div>
<div class="a" style="left:845px;top:888px;width:33px;text-align:center;font-size:14px;line-height:18px;color:#00a87e">2</div>
<div class="a" style="left:878px;top:880px;width:34px;height:34px;border:1px solid #c8c8c8;background:#fff"></div>
<div class="a" style="left:878px;top:888px;width:33px;text-align:center;font-size:14px;line-height:18px;color:#00a87e">3</div>
<div class="a" style="left:911px;top:880px;width:34px;height:34px;border:1px solid #c8c8c8;background:#fff"></div>
<div class="a" style="left:911px;top:888px;width:33px;text-align:center;font-size:14px;line-height:18px;color:#00a87e">4</div>
<div class="a" style="left:944px;top:880px;width:34px;height:34px;border:1px solid #c8c8c8;background:#fff"></div>
<div class="a" style="left:944px;top:888px;width:33px;text-align:center;font-size:14px;line-height:18px;color:#00a87e">5</div>
<div class="a" style="left:977px;top:880px;width:34px;height:34px;border:1px solid #c8c8c8;background:#fff"></div>
<div class="a" style="left:977px;top:888px;width:33px;text-align:center;font-size:14px;line-height:18px;color:#00a87e">&gt;</div>
<div class="a" style="left:1010px;top:880px;width:34px;height:34px;border:1px solid #c8c8c8;background:#fff"></div>
<div class="a" style="left:1010px;top:888px;width:33px;text-align:center;font-size:14px;line-height:18px;color:#00a87e">»</div>
<div class="a" style="left:1053px;top:879px;width:49px;height:31px;border:1px solid #ccc;background:#fff"></div>
<div class="a" style="left:1064px;top:887px;font-size:14px;line-height:16px;color:#00a87e;">10</div>
<svg class="a" style="left:1083px;top:894px" width="8" height="5" viewBox="0 0 8 5"><path d="M0 0h8l-4 4.5z" fill="#00a87e"/></svg>
<div class="a" style="left:1109px;top:887px;font-size:14px;line-height:16px;color:#333;">当前第 1 页，共 353 页，3529 条</div>
</div>
<div class="a" style="left:130px;top:84px;width:1773px;height:834px;background:rgba(7,35,32,0.6)"></div>
<div class="a" style="left:1903px;top:84px;width:17px;height:834px;background:#f1f1f1"></div>
<svg class="a" style="left:1907px;top:89px" width="9" height="6" viewBox="0 0 9 6"><path d="M0.5 5.5l4-4.5 4 4.5z" fill="#a3a3a3"/></svg>
<div class="a" style="left:1905px;top:101px;width:13px;height:803px;background:#c1c1c1"></div>
<div class="a" style="left:516px;top:227px;width:1003px;height:561px;background:#fff;border-radius:3px"></div>
<div class="a" style="left:1501px;top:227px;width:17px;height:561px;background:#f1f1f1;border-radius:0 3px 3px 0"></div>
<svg class="a" style="left:1505px;top:233px" width="9" height="6" viewBox="0 0 9 6"><path d="M0.5 5.5l4-4.5 4 4.5z" fill="#a3a3a3"/></svg>
<div class="a" style="left:1503px;top:245px;width:13px;height:452px;background:#c1c1c1"></div>
<svg class="a" style="left:1505px;top:776px" width="9" height="6" viewBox="0 0 9 6"><path d="M0.5 0.5l4 4.5 4-4.5z" fill="#505050"/></svg>
<svg class="a" style="left:1462px;top:241px" width="15" height="15" viewBox="0 0 15 15"><path d="M1.5 1.5l12 12M13.5 1.5l-12 12" stroke="#777" stroke-width="1.4"/></svg>
<div class="a" style="left:937px;top:250px;font-size:18px;line-height:20px;color:#6b6b6b;font-weight:bold;">房间收费标准详情</div>
<div class="a" style="left:541px;top:297px;font-size:18px;line-height:20px;color:#404040;">房间<span style="margin-right:2.5px">：</span>CMZ001 建筑面积<span style="margin-right:2px">：</span>55.00 套内面积<span style="margin-right:2px">：</span>45.00</div>
<div class="a" style="left:1407px;top:295px;width:70px;height:30px;background:#00cc99;border-radius:2px"></div>
<div class="a" style="left:1428px;top:303px;font-size:13px;line-height:16px;color:#fff;font-weight:bold;">添加</div>
<div class="a" style="left:542px;top:325px;width:182px;height:34px;border:1px solid #e3e7ea;border-bottom:none;background:#fff"></div>
<div class="a" style="left:542px;top:325px;width:182px;height:2px;background:#1ec99b"></div>
<div class="a" style="left:557px;top:339px;font-size:14px;line-height:16px;color:#1ec99b;">蔡某(业主15980019251)</div>
<div class="a" style="left:740px;top:333px;font-size:14px;line-height:16px;color:#777;">住cmz001(租户13599999865)</div>
<div class="a" style="left:541px;top:385px;width:936px;height:1px;background:#e3e7ea"></div>
<div class="a" style="left:0;top:0;width:1497px;height:918px;overflow:hidden">
<div class="a" style="left:542px;top:446px;width:1100px;height:41px;background:#f3f6f8"></div>
<div class="a" style="left:542px;top:487px;width:1100px;height:41px;background:#f3f6f8"></div>
<div class="a" style="left:542px;top:528px;width:1100px;height:41px;background:#e9faf2"></div>
<div class="a" style="left:542px;top:406px;width:1100px;height:1px;background:#dfe5e8"></div>
<div class="a" style="left:542px;top:446px;width:1100px;height:1px;background:#dfe5e8"></div>
<div class="a" style="left:542px;top:487px;width:1100px;height:1px;background:#dfe5e8"></div>
<div class="a" style="left:542px;top:528px;width:1100px;height:1px;background:#dfe5e8"></div>
<div class="a" style="left:542px;top:569px;width:1100px;height:1px;background:#dfe5e8"></div>
<div class="a" style="left:542px;top:406px;width:1px;height:164px;background:#dfe5e8"></div>
<div class="a" style="left:678px;top:406px;width:1px;height:164px;background:#dfe5e8"></div>
<div class="a" style="left:769px;top:406px;width:1px;height:164px;background:#dfe5e8"></div>
<div class="a" style="left:930px;top:406px;width:1px;height:164px;background:#dfe5e8"></div>
<div class="a" style="left:1021px;top:406px;width:1px;height:164px;background:#dfe5e8"></div>
<div class="a" style="left:1112px;top:406px;width:1px;height:164px;background:#dfe5e8"></div>
<div class="a" style="left:1303px;top:406px;width:1px;height:164px;background:#dfe5e8"></div>
<div class="a" style="left:1434px;top:406px;width:1px;height:164px;background:#dfe5e8"></div>
<div class="a" style="left:1620px;top:406px;width:1px;height:164px;background:#dfe5e8"></div>
<div class="a" style="left:584px;top:418px;font-size:13px;line-height:16px;color:#8a8a8a;font-weight:bold;">收费项目</div>
<div class="a" style="left:697.5px;top:418px;font-size:13px;line-height:16px;color:#8a8a8a;font-weight:bold;">费用类型</div>
<div class="a" style="left:823.5px;top:418px;font-size:13px;line-height:16px;color:#8a8a8a;font-weight:bold;">收费标准</div>
<div class="a" style="left:962px;top:418px;font-size:13px;line-height:16px;color:#8a8a8a;font-weight:bold;">单价</div>
<div class="a" style="left:1041px;top:418px;font-size:13px;line-height:16px;color:#8a8a8a;font-weight:bold;">计费比率</div>
<div class="a" style="left:1194px;top:418px;font-size:13px;line-height:16px;color:#8a8a8a;font-weight:bold;">仪表</div>
<div class="a" style="left:1343px;top:418px;font-size:13px;line-height:16px;color:#8a8a8a;font-weight:bold;">生效时间</div>
<div class="a" style="left:1473px;top:418px;font-size:13px;line-height:16px;color:#8a8a8a;font-weight:bold;">失效时间</div>
<div class="a" style="left:591px;top:459px;font-size:12px;line-height:16px;color:#555;">水费01</div>
<div class="a" style="left:699px;top:459px;font-size:12px;line-height:16px;color:#555;">仪表费用</div>
<div class="a" style="left:586px;top:500px;font-size:12px;line-height:16px;color:#555;">维修基金</div>
<div class="a" style="left:699px;top:500px;font-size:12px;line-height:16px;color:#555;">周期费用</div>
<div class="a" style="left:775px;top:452px;width:150px;height:30px;border:1px solid #dfe5e8;background:#fff"></div>
<div class="a" style="left:789px;top:460px;font-size:12px;line-height:16px;color:#555;">标准1</div>
<svg class="a" style="left:912px;top:463px" width="7" height="7" viewBox="0 0 7 7"><path d="M0 0.5h7l-3.5 6.5z" fill="#333"/></svg>
<div class="a" style="left:775px;top:493px;width:150px;height:30px;border:1px solid #dfe5e8;background:#fff"></div>
<div class="a" style="left:789px;top:501px;font-size:12px;line-height:16px;color:#555;">维修基金</div>
<svg class="a" style="left:912px;top:504px" width="7" height="7" viewBox="0 0 7 7"><path d="M0 0.5h7l-3.5 6.5z" fill="#333"/></svg>
<div class="a" style="left:972px;top:459px;font-size:12px;line-height:16px;color:#555;">2</div>
<div class="a" style="left:967px;top:500px;font-size:12px;line-height:16px;color:#555;">0.3</div>
<div class="a" style="left:1035px;top:452px;width:52px;height:30px;border:1px solid #dfe5e8;background:#fff"></div>
<div class="a" style="left:1047px;top:459px;font-size:12px;line-height:16px;color:#555;">100</div>
<div class="a" style="left:1088px;top:459px;font-size:12px;line-height:16px;color:#555;">%</div>
<div class="a" style="left:1035px;top:493px;width:52px;height:30px;border:1px solid #dfe5e8;background:#fff"></div>
<div class="a" style="left:1047px;top:500px;font-size:12px;line-height:16px;color:#555;">100</div>
<div class="a" style="left:1088px;top:500px;font-size:12px;line-height:16px;color:#555;">%</div>
<div class="a" style="left:1118px;top:452px;width:180px;height:30px;border:1px solid #dfe5e8;background:#fff"></div>
<div class="a" style="left:1132px;top:460px;font-size:12px;line-height:16px;color:#555;">水表(CMZ001-水表-264973</div>
<svg class="a" style="left:1285px;top:463px" width="7" height="7" viewBox="0 0 7 7"><path d="M0 0.5h7l-3.5 6.5z" fill="#333"/></svg>
<div class="a" style="left:1309px;top:494px;width:120px;height:28px;background:#fff"></div>
<div class="a" style="left:1319px;top:494px;width:104px;height:28px;border:1px solid #999;background:#fff"></div>
<svg class="a" style="left:1404px;top:502px" width="15" height="12" viewBox="0 0 15 12"><rect x="0.5" y="1.5" width="14" height="10" fill="none" stroke="#bbb"/><path d="M0.5 4h14" stroke="#bbb" stroke-width="1.5"/><path d="M3 6h2M6.5 6h2M10 6h2M3 8.5h2M6.5 8.5h2M10 8.5h2" stroke="#bbb"/><path d="M4 0v2M11 0v2" stroke="#bbb"/></svg>
<div class="a" style="left:1440px;top:494px;width:120px;height:28px;background:#fff"></div>
<div class="a" style="left:1450px;top:494px;width:104px;height:28px;border:1px solid #999;background:#fff"></div>
<div class="a" style="left:548px;top:534px;width:125px;height:30px;border:1px solid #3cc9a0;background:#fff"></div>
<div class="a" style="left:562px;top:542px;font-size:12px;line-height:16px;color:#555;">请选择收费项目</div>
<svg class="a" style="left:659px;top:545px" width="7" height="7" viewBox="0 0 7 7"><path d="M0 0.5h7l-3.5 6.5z" fill="#333"/></svg>
</div>
<div class="a" style="left:548px;top:564px;width:250px;height:342px;border:1px solid #8aa4d6;background:#fff"></div>
<div class="a" style="left:549px;top:565px;width:231px;height:17px;background:#1e90ff"></div>
<div class="a" style="left:553px;top:565.70px;font-size:12px;line-height:16px;color:#fff">请选择收费项目</div>
<div class="a" style="left:553px;top:582.56px;font-size:12px;line-height:16px;color:#333">水费0507</div>
<div class="a" style="left:553px;top:599.42px;font-size:12px;line-height:16px;color:#333">集团自然</div>
<div class="a" style="left:553px;top:616.28px;font-size:12px;line-height:16px;color:#333">7楼租金</div>
<div class="a" style="left:553px;top:633.14px;font-size:12px;line-height:16px;color:#333">管理费03194-双月-循环周期</div>
<div class="a" style="left:553px;top:650.00px;font-size:12px;line-height:16px;color:#333">管理费测试20210729</div>
<div class="a" style="left:553px;top:666.86px;font-size:12px;line-height:16px;color:#333">停车费（按季）</div>
<div class="a" style="left:553px;top:683.72px;font-size:12px;line-height:16px;color:#333">联科水费</div>
<div class="a" style="left:553px;top:700.58px;font-size:12px;line-height:16px;color:#333">管理费05311-年（明细）-自然周期-/12</div>
<div class="a" style="left:553px;top:717.44px;font-size:12px;line-height:16px;color:#333">水表0618</div>
<div class="a" style="left:553px;top:734.30px;font-size:12px;line-height:16px;color:#333">金年华水费</div>
<div class="a" style="left:553px;top:751.16px;font-size:12px;line-height:16px;color:#333">物业管理费</div>
<div class="a" style="left:553px;top:768.02px;font-size:12px;line-height:16px;color:#333">维修基金</div>
<div class="a" style="left:553px;top:784.88px;font-size:12px;line-height:16px;color:#333">水费维护费</div>
<div class="a" style="left:553px;top:801.74px;font-size:12px;line-height:16px;color:#333">租金0611</div>
<div class="a" style="left:553px;top:818.60px;font-size:12px;line-height:16px;color:#333">Rental</div>
<div class="a" style="left:553px;top:835.46px;font-size:12px;line-height:16px;color:#333">联科租金</div>
<div class="a" style="left:553px;top:852.32px;font-size:12px;line-height:16px;color:#333">车卡07191</div>
<div class="a" style="left:553px;top:869.18px;font-size:12px;line-height:16px;color:#333">季度管理费</div>
<div class="a" style="left:553px;top:886.04px;font-size:12px;line-height:16px;color:#333">管理费06282</div>
<div class="a" style="left:780px;top:565px;width:17px;height:340px;background:#f0f0f0"></div>
<svg class="a" style="left:784px;top:570px" width="9" height="6" viewBox="0 0 9 6"><path d="M0.5 5.5l4-4.5 4 4.5z" fill="#a3a3a3"/></svg>
<div class="a" style="left:782px;top:582px;width:13px;height:60px;background:#c1c1c1"></div>
<svg class="a" style="left:784px;top:892px" width="9" height="6" viewBox="0 0 9 6"><path d="M0.5 0.5l4 4.5 4-4.5z" fill="#505050"/></svg>
<div class="a" style="left:941px;top:323px;font-size:16px;line-height:20px;letter-spacing:-0.2px;color:#e8262b"><span style="display:inline-block;width:15.3px;font-size:17px;line-height:20px;vertical-align:top;letter-spacing:0">①</span>切换客户页面，进行具体客户下的收费项目添加</div>
<div class="a" style="left:1318px;top:366px;font-size:16px;line-height:20px;letter-spacing:0px;color:#e8262b"><span style="display:inline-block;width:15.3px;font-size:17px;line-height:20px;vertical-align:top;letter-spacing:0">②</span>点击添加，添加收费项目</div>
<div class="a" style="left:690px;top:535px;font-size:16px;line-height:20px;letter-spacing:-0.4px;color:#e8262b"><span style="display:inline-block;width:15.3px;font-size:17px;line-height:20px;vertical-align:top;letter-spacing:0">③</span>下拉选择收费项目</div>
<div class="a" style="left:1021px;top:558px;font-size:16px;line-height:20px;letter-spacing:-0.33px;color:#e8262b"><span style="display:inline-block;width:15.3px;font-size:17px;line-height:20px;vertical-align:top;letter-spacing:0">④</span>配置收费项目生效、失效时间（可为空）；仪表类则需要选择对应绑定的仪表</div>
<svg class="a" style="left:0;top:0" width="1920" height="918" viewBox="0 0 1920 918"><path d="M1451.6 325.5L1437.2 349.2" stroke="#e8262b" stroke-width="3.1" stroke-linecap="round"/><path d="M1431.0 359.5L1432.4 344.0L1436.7 350.1L1444.1 351.0z" fill="#e8262b"/><path d="M744.0 568.0L668.7 616.5" stroke="#e8262b" stroke-width="3.1" stroke-linecap="round"/><path d="M658.6 623.0L666.7 609.7L667.8 617.0L674.1 621.1z" fill="#e8262b"/><path d="M1128.9 549.7L1161.7 496.7" stroke="#e8262b" stroke-width="3.1" stroke-linecap="round"/><path d="M1168.0 486.5L1166.4 502.0L1162.2 495.9L1154.9 494.8z" fill="#e8262b"/><path d="M1314.0 549.7L1348.1 530.4" stroke="#e8262b" stroke-width="3.1" stroke-linecap="round"/><path d="M1358.5 524.5L1349.7 537.3L1348.9 529.9L1343.0 525.5z" fill="#e8262b"/><path d="M534 366L927 366" stroke="#e8262b" stroke-width="4" stroke-linecap="round"/></svg>
<div class="a" style="left:1631px;top:833px;font-size:20px;line-height:24px;letter-spacing:0.6px;color:rgba(200,210,207,0.55)">激活 Windows</div>
<div class="a" style="left:1631px;top:861px;font-size:15px;line-height:17px;letter-spacing:0.4px;color:rgba(200,210,207,0.55)">转到“设置”以激活 Windows。</div>
</body></html>
